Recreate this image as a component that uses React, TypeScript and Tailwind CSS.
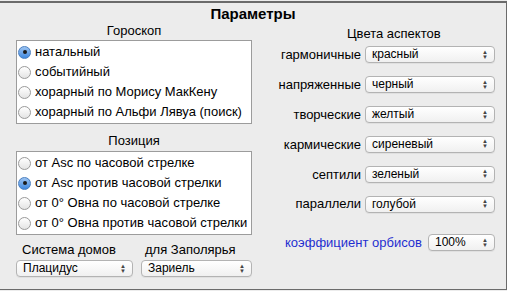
import React from "react";

const font = { fontFamily: '"Liberation Sans", Arial, sans-serif' };

const Radio = ({ checked, label }: { checked?: boolean; label: string }) => (
  <div className="flex items-center h-[20px] pl-[1px]">
    {checked ? (
      <span className="w-[13px] h-[13px] rounded-full border border-[#4a7fc0] bg-gradient-to-b from-[#9cc4f2] to-[#3f89e0] flex items-center justify-center shrink-0">
        <span className="w-[4px] h-[4px] rounded-full bg-[#1a1a1a]" />
      </span>
    ) : (
      <span className="w-[13px] h-[13px] rounded-full border border-[#9a9a9a] bg-gradient-to-b from-[#ffffff] to-[#e4e4e4] shrink-0" />
    )}
    <span className="ml-[4px] text-[13px] text-black">{label}</span>
  </div>
);

const Select = ({ value, width }: { value: string; width: string }) => (
  <div
    className={`${width} h-[17px] rounded-[4px] border border-[#b3b3b3] bg-gradient-to-b from-[#ffffff] to-[#f0f0f0] flex items-center justify-between pl-[6px] pr-[6px] shadow-[0_1px_0_rgba(0,0,0,0.05)]`}
  >
    <span className="text-[12px] leading-[15px] text-black">{value}</span>
    <span className="flex flex-col items-center leading-none text-[#444]">
      <span className="text-[6px] leading-[5px]">▲</span>
      <span className="text-[6px] leading-[5px]">▼</span>
    </span>
  </div>
);

export default function App() {
  const aspects = [
    ["гармоничные", "красный"],
    ["напряженные", "черный"],
    ["творческие", "желтый"],
    ["кармические", "сиреневый"],
    ["септили", "зеленый"],
    ["параллели", "голубой"],
  ];
  return (
    <div className="w-[507px] h-[291px] bg-[#ececec] pt-px" style={font}>
      <div className="h-[289px] bg-[#ececec] border-t-2 border-r border-b border-[#6b6b6b] flex flex-col">
        <div className="text-center text-[15px] font-bold text-black leading-[18px] mt-[2px]">
          Параметры
        </div>
        <div className="flex">
          <div className="w-[236px] ml-[16px] flex flex-col">
            <div className="text-center text-[13px] leading-[16px]">Гороскоп</div>
            <div className="mt-[1px] border border-[#9c9c9c] bg-white py-[1px]">
              <Radio checked label="натальный" />
              <Radio label="событийный" />
              <Radio label="хорарный по Морису МакКену" />
              <Radio label="хорарный по Альфи Лявуа (поиск)" />
            </div>
            <div className="text-center text-[13px] leading-[16px] mt-[9px]">Позиция</div>
            <div className="mt-[2px] border border-[#9c9c9c] bg-white py-[1px]">
              <Radio label="от Asc по часовой стрелке" />
              <Radio checked label="от Asc против часовой стрелки" />
              <Radio label="от 0° Овна по часовой стрелке" />
              <Radio label="от 0° Овна против часовой стрелки" />
            </div>
            <div className="flex mt-[7px]">
              <div className="flex flex-col w-[125px]">
                <div className="text-[13px] leading-[16px] pl-[6px]">Система домов</div>
                <div className="mt-[2px]">
                  <Select value="Плацидус" width="w-[117px]" />
                </div>
              </div>
              <div className="flex flex-col flex-1">
                <div className="text-[13px] leading-[16px] pl-[4px]">для Заполярья</div>
                <div className="mt-[2px]">
                  <Select value="Зариель" width="w-[111px]" />
                </div>
              </div>
            </div>
          </div>
          <div className="flex-1 flex flex-col pl-[10px]">
            <div className="text-[13px] leading-[16px] mt-[3px] pl-[85px]">Цвета аспектов</div>
            <div className="flex flex-col gap-[10.4px] mt-[3px]">
              {aspects.map(([l, v]) => (
                <div key={l} className="flex items-center">
                  <div className="w-[103px] text-right text-[13px] pr-[4px]">{l}</div>
                  <Select value={v} width="w-[130px]" />
                </div>
              ))}
            </div>
            <div className="flex items-center mt-[19px] justify-end pr-[11px]">
              <span className="text-[13px] text-[#1f2fd0] mr-[6px]">коэффициент орбисов</span>
              <Select value="100%" width="w-[67px]" />
            </div>
          </div>
        </div>
      </div>
    </div>
  );
}
